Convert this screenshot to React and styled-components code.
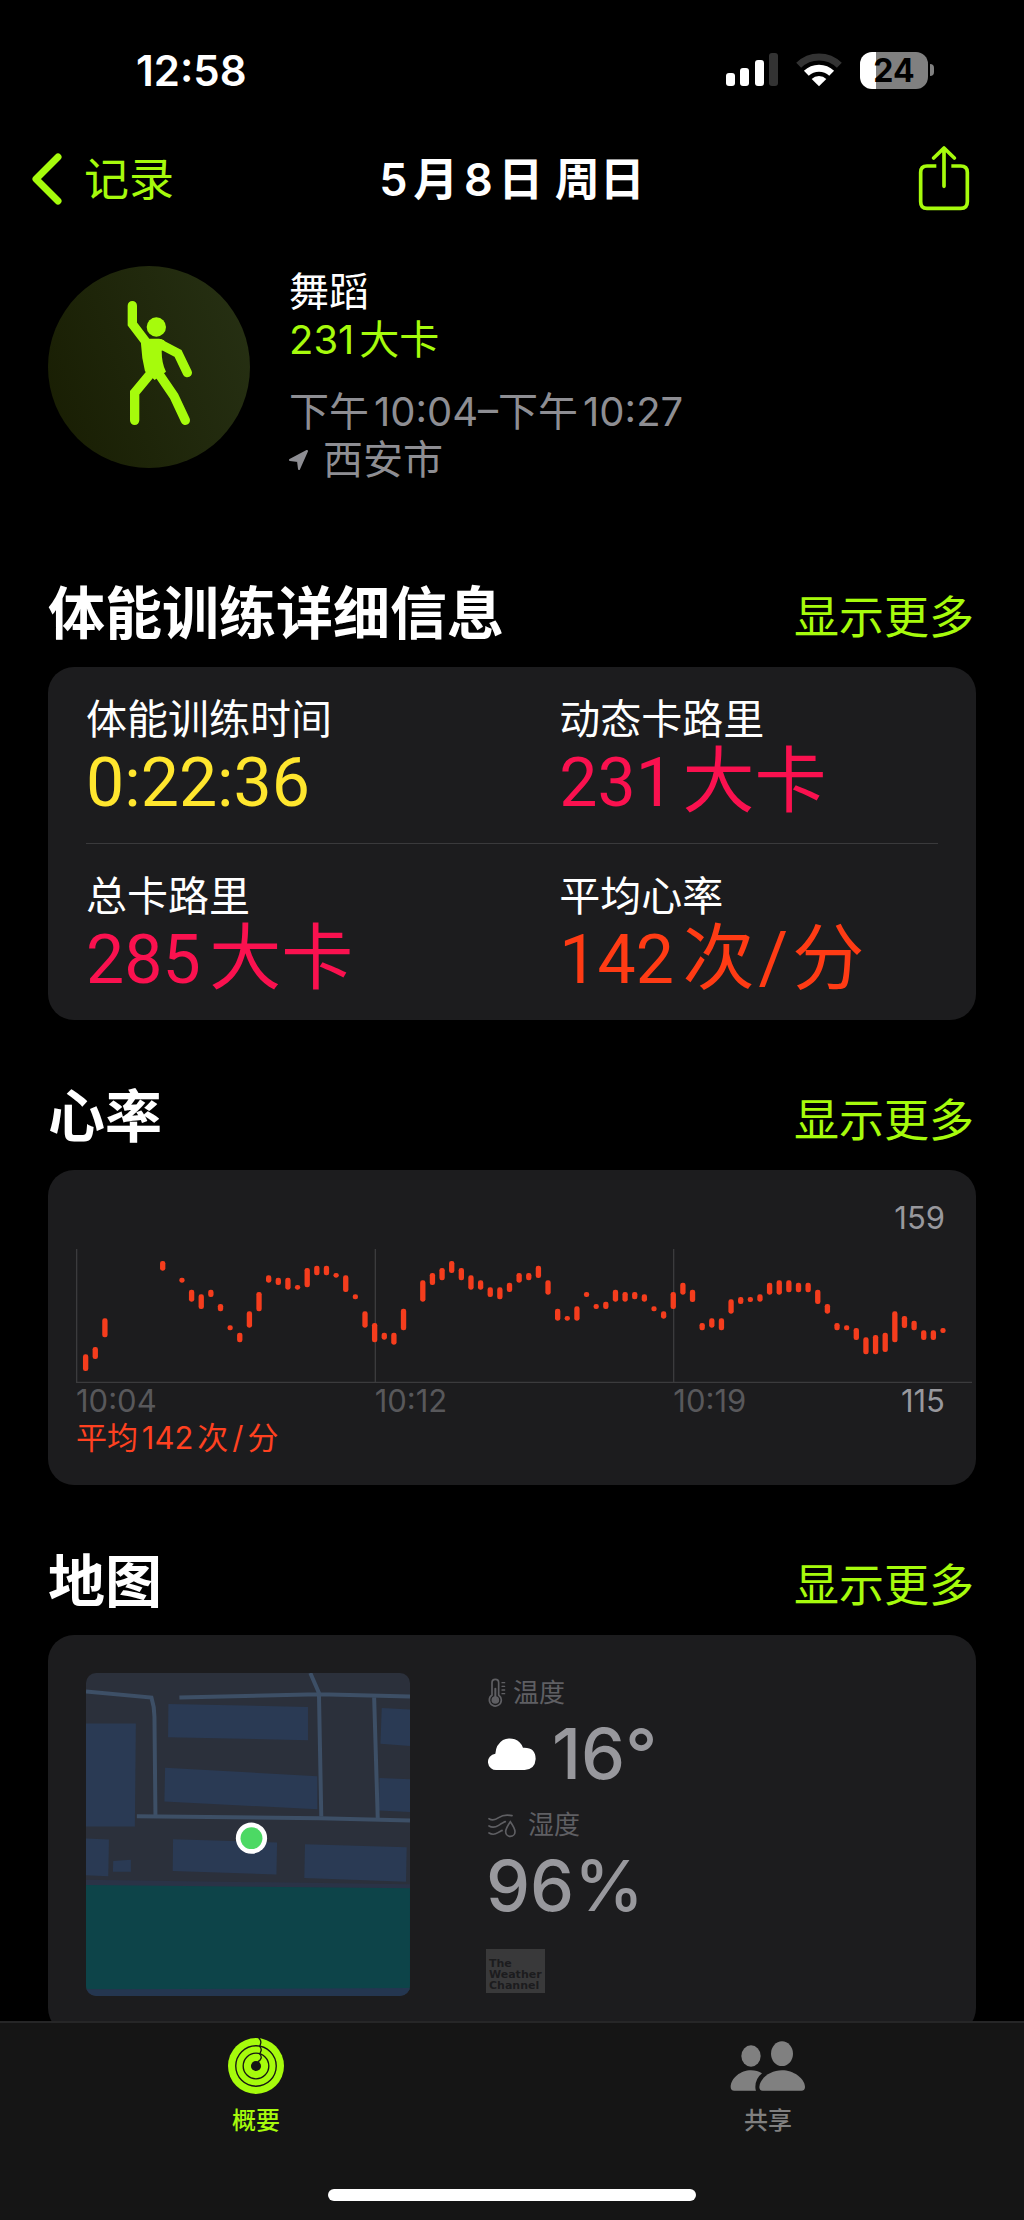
import styled, { createGlobalStyle } from 'styled-components'

const GREEN = '#a6fb0c'

// [slot, top, bottom] of every heart rate sample
const heartRate = [
    [1, 316, 366], [2, 294, 330], [3, 208, 265], [9, 36, 65], [11, 86, 101],
    [12, 122, 158], [13, 136, 180], [14, 122, 144], [15, 165, 187], [16, 229, 244],
    [17, 251, 280], [18, 187, 236], [19, 129, 187], [20, 79, 101], [21, 86, 108],
    [22, 86, 122], [23, 108, 122], [24, 57, 115], [25, 50, 79], [26, 50, 79],
    [27, 72, 86], [28, 79, 129], [29, 136, 151], [30, 187, 236], [31, 222, 280],
    [32, 251, 272], [33, 251, 287], [34, 179, 244], [36, 94, 158], [37, 72, 108],
    [38, 57, 94], [39, 36, 72], [40, 57, 94], [41, 79, 122], [42, 94, 122],
    [43, 115, 144], [44, 115, 151], [45, 101, 129], [46, 72, 101], [47, 72, 94],
    [48, 50, 87], [49, 94, 137], [50, 179, 215], [51, 201, 215], [52, 172, 215],
    [53, 129, 144], [54, 165, 180], [55, 158, 180], [56, 122, 158], [57, 129, 158],
    [58, 129, 151], [59, 136, 158], [60, 172, 187], [61, 187, 209], [62, 129, 180],
    [63, 101, 137], [64, 122, 159], [65, 222, 244], [66, 208, 236], [67, 208, 244],
    [68, 151, 194], [69, 144, 165], [70, 144, 159], [71, 136, 158], [72, 101, 137],
    [73, 94, 137], [74, 94, 130], [75, 101, 130], [76, 101, 130], [77, 122, 165],
    [78, 165, 194], [79, 222, 244], [80, 229, 244], [81, 237, 273], [82, 265, 316],
    [83, 258, 316], [84, 251, 309], [85, 187, 280], [86, 201, 237], [87, 215, 244],
    [88, 244, 273], [89, 244, 273], [90, 237, 252],
]

export default function App(){
    return (
        <Screen>
        <GlobalStyle/>
        <StatusBar>
            <Clock>12:58</Clock>
            <StatusIcons>
                <Signal/>
                <Wifi/>
                <Battery><Level>24</Level><Nub/></Battery>
            </StatusIcons>
        </StatusBar>
        <NavBar>
            <Back href="#history"><Chevron/><span>记录</span></Back>
            <Title>5月8日 周日</Title>
            <Share type="button" aria-label="共享"><ShareIcon/></Share>
        </NavBar>
        <Content>
            <Summary>
                <Badge><Dancer/></Badge>
                <Facts>
                    <Line $color="#fff">舞蹈</Line>
                    <Line $color={GREEN}>231大卡</Line>
                    <Line $spaced>下午10:04–下午10:27</Line>
                    <Line><Arrow/>西安市</Line>
                </Facts>
            </Summary>

            <SectionHead title="体能训练详细信息"/>
            <Card>
                <MetricRow>
                    <Metric label="体能训练时间" color="#ffe62e">0:22:36</Metric>
                    <Metric label="动态卡路里" color="#fa114f">231<Unit>大卡</Unit></Metric>
                </MetricRow>
                <MetricRow>
                    <Metric label="总卡路里" color="#fa114f">285<Unit>大卡</Unit></Metric>
                    <Metric label="平均心率" color="#ff3b14">142<Unit>次<Slash>/</Slash>分</Unit></Metric>
                </MetricRow>
            </Card>

            <SectionHead title="心率"/>
            <ChartCard>
                <Peak>159</Peak>
                <HeartChart/>
                <Axis>
                    <span>10:04</span>
                    <span>10:12</span>
                    <span>10:19<Low>115</Low></span>
                </Axis>
                <Average>平均142次<Slash>/</Slash>分</Average>
            </ChartCard>

            <SectionHead title="地图"/>
            <MapCard>
                <Map/>
                <Weather>
                    <Caption><Thermometer/>温度</Caption>
                    <Reading><Cloud/>16°</Reading>
                    <Caption $wide><Humidity/>湿度</Caption>
                    <Reading>96%</Reading>
                    <Provider>The<br/>Weather<br/>Channel</Provider>
                </Weather>
            </MapCard>
        </Content>
        <TabBar>
            <Tabs>
                <Tab href="#summary" $active><Rings/>概要</Tab>
                <Tab href="#sharing"><People/>共享</Tab>
            </Tabs>
            <HomeIndicator/>
        </TabBar>
        </Screen>
    )
}

function SectionHead({ title }){
    return (
        <Header>
            <h2>{title}</h2>
            <a href="#more">显示更多</a>
        </Header>
    )
}

function Metric({ label, color, children }){
    return (
        <div>
            <Label>{label}</Label>
            <Value $color={color}>{children}</Value>
        </div>
    )
}

function HeartChart(){
    return (
        <Plot viewBox="0 0 2688 402" role="img" aria-label="心率">
            <path d="M2 0V400M898 0V400M1793 0V400M0 400H2688" stroke="#3b3b3d" strokeWidth="4"/>
            {heartRate.map(([slot, top, bottom]) => (
                <rect key={slot} x={slot * 28.9 - 8} y={top} width="16" height={bottom - top} rx="7" fill="#f53d1d"/>
            ))}
        </Plot>
    )
}

function Map(){
    return (
        <MapView viewBox="165 428 975 972" role="img" aria-label="地图">
            <rect x="165" y="428" width="975" height="972" fill="#2b303b"/>
            <g fill="#2a3a54">
                <path d="M165 580H315L312 890H165Z"/>
                <path d="M413 521L833 530V630L412 621Z"/>
                <path d="M403 713L861 739V838L401 815Z"/>
                <path d="M1055 533L1140 538V648L1051 641Z"/>
                <path d="M1048 744L1140 748V846L1046 842Z"/>
                <path d="M165 926L234 929L232 1040L165 1037Z"/>
                <path d="M247 994L300 990V1026H246Z"/>
                <path d="M427 928L740 938L738 1034L426 1024Z"/>
                <path d="M824 943L1130 952L1128 1056L822 1045Z"/>
            </g>
            <path d="M165 1050L1140 1064V1100H165Z" fill="#2a3347"/>
            <path d="M165 1066L1140 1076V1384L165 1380Z" fill="#0d4449"/>
            <path d="M165 1380L1140 1376V1400H165Z" fill="#243650"/>
            <g fill="none" stroke="#3d4f66" strokeWidth="12">
                <path d="M165 484L362 502Q371 530 371 560L374 858"/>
                <path d="M446 502L866 492L1140 499M840 428L866 488L873 860M1032 498L1043 868"/>
                <path d="M318 859L870 865L1140 872"/>
            </g>
            <circle cx="663" cy="925" r="47" fill="#fff"/>
            <circle cx="663" cy="925" r="33" fill="#4cd964"/>
        </MapView>
    )
}

const Signal = () => (
    <svg width="52" height="34" viewBox="0 0 52 34">
        <g fill="#fff">
            <rect x="0" y="20" width="9" height="13" rx="3"/>
            <rect x="14" y="15" width="9" height="18" rx="3"/>
            <rect x="29" y="7" width="9" height="26" rx="3"/>
        </g>
        <rect x="43" y="0" width="9" height="33" rx="3" fill="#333"/>
    </svg>
)

const Wifi = () => (
    <svg width="46" height="34" viewBox="289 65 138 102" fill="none" strokeWidth="21">
        <path d="M297 102A87 87 0 0 1 419 102" stroke="#333"/>
        <path d="M320 126A55 55 0 0 1 396 126" stroke="#fff"/>
        <path d="M358 165L336 143A31 31 0 0 1 380 143Z" fill="#fff" strokeWidth="0"/>
    </svg>
)

const Chevron = () => (
    <svg width="30" height="52" viewBox="0 0 30 52" fill="none" stroke="currentColor" strokeWidth="7" strokeLinecap="round" strokeLinejoin="round">
        <path d="M26 4L4 26L26 48"/>
    </svg>
)

const ShareIcon = () => (
    <svg width="52" height="66" viewBox="655 344 156 198" fill="none" stroke="currentColor" strokeWidth="11" strokeLinecap="round" strokeLinejoin="round">
        <path d="M710 404H682Q663 404 663 423V511Q663 531 682 531H783Q803 531 803 511V423Q803 404 783 404H755" strokeLinecap="butt"/>
        <path d="M733 465V352M702 380L733 350L764 380"/>
    </svg>
)

const Dancer = () => (
    <svg width="202" height="202" viewBox="12 18 606 606" fill="none" stroke={GREEN} strokeWidth="28" strokeLinecap="round">
        <circle cx="337" cy="201" r="29" fill={GREEN} strokeWidth="0"/>
        <path d="M265 137V192L306 246"/>
        <path d="M346 251L402 280L430 338"/>
        <path d="M318 343L272 398V481"/>
        <path d="M342 338L390 408L424 481"/>
        <path d="M291 244Q300 236 320 236H345Q352 236 360 241L372 262L353 272Q353 310 366 335L332 360L303 334Q293 295 291 252Z" fill={GREEN} strokeWidth="0"/>
    </svg>
)

const Arrow = () => (
    <svg width="20" height="22" viewBox="0 0 20 22" fill="currentColor" stroke="currentColor" strokeWidth="2" strokeLinejoin="round">
        <path d="M18 2L10 20L9 12L1 11Z"/>
    </svg>
)

const Thermometer = () => (
    <svg width="18" height="30" viewBox="0 0 54 90" fill="none" stroke="currentColor" strokeWidth="5" strokeLinecap="round">
        <path d="M12 51V14Q12 4 22 4T32 14V51Q40 58 40 66A18 18 0 1 1 12 51Z"/>
        <circle cx="22" cy="66" r="9" fill="currentColor"/>
        <path d="M22 62V32" strokeWidth="6"/>
        <path d="M42 14H50M42 25H50M42 36H50M42 47H50" strokeWidth="4"/>
    </svg>
)

const Cloud = () => (
    <svg width="48" height="34" viewBox="0 0 144 102" fill="#fff">
        <path d="M27 99A24 24 0 0 1 22 50Q24 22 45 9A43 43 0 0 1 105 32Q143 30 143 66Q141 97 110 99Z"/>
    </svg>
)

const Humidity = () => (
    <svg width="29" height="26" viewBox="0 0 87 78" fill="none" stroke="currentColor" strokeWidth="5" strokeLinecap="round">
        <path d="M3 20Q16 28 32 17T72 11"/>
        <path d="M3 42Q16 50 32 40T52 29"/>
        <path d="M3 63Q16 71 30 62T42 56"/>
        <path d="M67 29Q53 49 53 59A14 14 0 0 0 81 59Q81 49 67 29Z"/>
    </svg>
)

const Rings = () => (
    <svg width="56" height="56" viewBox="37 43 166 166" fill="none" stroke="#151515" strokeWidth="4">
        <circle cx="120" cy="126" r="83" fill={GREEN} strokeWidth="0"/>
        <circle cx="120" cy="126" r="60"/>
        <circle cx="120" cy="126" r="38"/>
        <circle cx="120" cy="126" r="15" fill="#151515" strokeWidth="0"/>
        <path d="M128 43Q136 50 134 58T131 68Q137 75 135 81T131 90Q137 97 135 103T126 113"/>
    </svg>
)

const People = () => (
    <svg width="76" height="56" viewBox="43 40 228 168" fill="currentColor">
        <ellipse cx="106" cy="94" rx="29" ry="32"/>
        <ellipse cx="199" cy="87" rx="33" ry="37"/>
        <path d="M56 198Q45 198 45 187C46 160 75 137 106 137Q125 137 139 146Q119 162 119 187Q119 193 121 198Z"/>
        <path d="M141 198Q131 198 131 187C133 160 165 137 199 137S266 160 268 187Q268 198 257 198Z"/>
    </svg>
)

const GlobalStyle = createGlobalStyle`
    * {
        box-sizing: border-box;
    }
    body {
        margin: 0;
        background: #000;
        color: #fff;
        font-family: Inter, "Noto Sans CJK SC", sans-serif;
        text-autospace: normal;
    }
    h1, h2, p {
        margin: 0;
    }
    a {
        color: ${GREEN};
        text-decoration: none;
    }
    svg {
        display: block;
        flex: none;
    }
`
const Screen = styled.div`
    display: flex;
    flex-direction: column;
    height: 100vh;
`
const StatusBar = styled.div`
    display: flex;
    justify-content: space-between;
    align-items: center;
    flex: none;
    height: 140px;
    padding: 0 90px 0 136px;
`
const Clock = styled.span`
    font-size: 42px;
    font-weight: 600;
`
const StatusIcons = styled.div`
    display: flex;
    align-items: center;
    gap: 18px;
`
const Battery = styled.div`
    display: flex;
    align-items: center;
    gap: 2px;
`
const Level = styled.span`
    width: 68px;
    border-radius: 12px;
    background: linear-gradient(90deg, #fff 24%, #808080 24%);
    color: #000;
    font-size: 32px;
    font-weight: 700;
    line-height: 37px;
    text-align: center;
`
const Nub = styled.span`
    width: 4px;
    height: 12px;
    border-radius: 0 4px 4px 0;
    background: #808080;
`
const NavBar = styled.header`
    display: grid;
    grid-template-columns: 1fr auto 1fr;
    align-items: center;
    flex: none;
    height: 78px;
    padding: 0 32px;
`
const Back = styled.a`
    display: flex;
    align-items: center;
    gap: 22px;
    font-size: 45px;
    span {
        padding-bottom: 6px;
    }
`
const Title = styled.h1`
    padding-bottom: 6px;
    font-size: 45px;
    font-weight: 600;
`
const Share = styled.button`
    justify-self: end;
    margin-right: 22px;
    padding: 0;
    border: 0;
    background: none;
    color: ${GREEN};
`
const Content = styled.main`
    flex: 1;
    min-height: 0;
    padding: 48px 48px 0;
    overflow-y: auto;
    scrollbar-width: none;
`
const Summary = styled.section`
    display: flex;
    align-items: flex-start;
    gap: 39px;
    margin-bottom: 33px;
`
const Badge = styled.div`
    border-radius: 50%;
    background: linear-gradient(70deg, #181d02, #273114);
`
const Facts = styled.div`
    padding-top: 2px;
`
const Line = styled.p`
    display: flex;
    align-items: center;
    gap: 14px;
    margin-top: ${props => props.$spaced ? '24px' : '0'};
    color: ${props => props.$color || '#8e8e93'};
    font-size: 40px;
    line-height: 48px;
`
const Header = styled.div`
    display: flex;
    justify-content: space-between;
    align-items: baseline;
    padding: 62px 2px 18px 0;
    h2 {
        font-size: 57px;
        font-weight: 700;
        line-height: 70px;
    }
    a {
        font-size: 45px;
        line-height: 56px;
    }
`
const Card = styled.section`
    padding: 0 38px;
    border-radius: 26px;
    background: #1c1c1e;
`
const MetricRow = styled.div`
    display: grid;
    grid-template-columns: 5fr 4fr;
    padding: 28px 0 20px;
    & + & {
        border-top: 1px solid #3a3a3c;
    }
`
const Label = styled.p`
    font-size: 41px;
    line-height: 48px;
`
const Value = styled.p`
    color: ${props => props.$color};
    font-family: Roboto, "Noto Sans CJK SC", sans-serif;
    font-size: 68px;
    line-height: 80px;
`
const Unit = styled.span`
    font-size: 72px;
    line-height: 72px;
`
const Slash = styled.span`
    margin: 0 4px;
`
const ChartCard = styled(Card)`
    padding: 29px 4px 28px 28px;
    font-size: 31px;
`
const Peak = styled.p`
    margin-bottom: 12px;
    padding-right: 27px;
    color: #98989d;
    line-height: 38px;
    text-align: right;
`
const Plot = styled.svg`
    width: 100%;
`
const Axis = styled.div`
    display: grid;
    grid-template-columns: repeat(3, 1fr);
    color: #58585b;
    line-height: 36px;
    span {
        display: flex;
        justify-content: space-between;
    }
`
const Low = styled.span`
    padding-right: 27px;
    color: #98989d;
`
const Average = styled.p`
    color: #ff4120;
    line-height: 38px;
`
const MapCard = styled(Card)`
    display: flex;
    gap: 76px;
    padding: 38px;
`
const MapView = styled.svg`
    width: 324px;
    border-radius: 10px;
`
const Weather = styled.div`
    display: flex;
    flex-direction: column;
    align-items: flex-start;
`
const Caption = styled.p`
    display: flex;
    align-items: center;
    gap: ${props => props.$wide ? '11px' : '7px'};
    padding-left: 2px;
    color: #5f5f63;
    font-size: 26px;
    line-height: 40px;
`
const Reading = styled.p`
    display: flex;
    align-items: center;
    gap: 16px;
    margin-bottom: 10px;
    color: #98989d;
    font-size: 70px;
    font-weight: 500;
    line-height: 82px;
    svg {
        margin-left: 2px;
    }
`
const Provider = styled.p`
    margin-top: 12px;
    padding: 9px 3px 2px;
    background: #39393a;
    color: #1c1c1e;
    font-family: "DejaVu Sans", sans-serif;
    font-size: 11px;
    font-weight: 700;
    line-height: 11px;
`
const TabBar = styled.footer`
    display: flex;
    flex-direction: column;
    justify-content: space-between;
    align-items: center;
    flex: none;
    height: 199px;
    padding: 15px 0 19px;
    border-top: 2px solid #262627;
    background: #151515;
`
const Tabs = styled.nav`
    display: grid;
    grid-template-columns: 1fr 1fr;
    width: 100%;
`
const Tab = styled.a`
    display: flex;
    flex-direction: column;
    align-items: center;
    gap: 10px;
    color: ${props => props.$active ? GREEN : '#808080'};
    font-size: 24px;
    font-weight: 500;
    line-height: 34px;
`
const HomeIndicator = styled.div`
    width: 36%;
    height: 12px;
    border-radius: 6px;
    background: #fff;
`
